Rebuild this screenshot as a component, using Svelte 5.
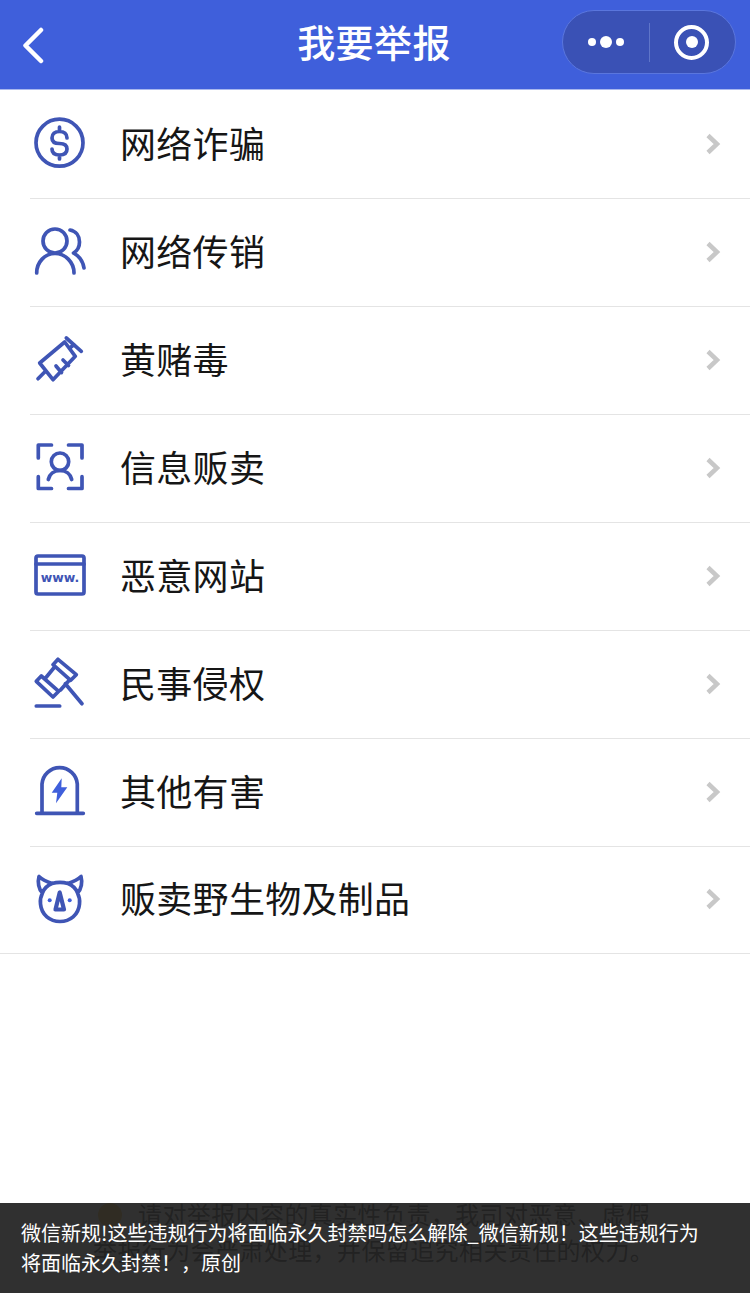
<script>
  const items = [
    { icon: 'dollar', label: '网络诈骗' },
    { icon: 'users', label: '网络传销' },
    { icon: 'syringe', label: '黄赌毒' },
    { icon: 'scan', label: '信息贩卖' },
    { icon: 'www', label: '恶意网站' },
    { icon: 'gavel', label: '民事侵权' },
    { icon: 'alarm', label: '其他有害' },
    { icon: 'rhino', label: '贩卖野生物及制品' }
  ];
</script>

<div class="page">
  <header class="nav">
    <svg class="back" viewBox="0 0 24 38" aria-hidden="true">
      <path d="M19 4 L3.5 19.5 L19 35" />
    </svg>
    <h1>我要举报</h1>
    <div class="capsule">
      <div class="dots">
        <span class="dot"></span>
        <span class="dot big"></span>
        <span class="dot"></span>
      </div>
      <span class="sep"></span>
      <div class="target"><span></span></div>
    </div>
  </header>

  <ul class="list">
    {#each items as item}
      <li class="row">
        <svg class="icon" viewBox="0 0 60 60" aria-hidden="true">
          {#if item.icon === 'dollar'}
            <circle cx="29.5" cy="28.7" r="23.5" />
            <path d="M37 24 C37 20 34 17.5 29.5 17.5 C25 17.5 22 20 22 24 C22 28 25.5 29.5 29.5 29.5 C33.5 29.5 37 31 37 35 C37 39 34 41 29.5 41 C25 41 22 39 22 35 M29.5 13 V17.5 M29.5 41 V45" />
          {:else if item.icon === 'users'}
            <circle cx="25" cy="19" r="12" />
            <path d="M6.7 51 C6.7 40 15 31.5 25 31.5 S44 40 44 51 M40 8 C46 9 49.5 14 49.5 20 C49.5 25 47 29 43.5 31 C49 34 53 40 54 46" />
          {:else if item.icon === 'syringe'}
            <path d="M9.7 33 L34.7 12 L45.3 26.3 L23 49.7 Z M39.7 18 L44 14.7 M36.3 8 L51.3 21.3 M8 48.7 L14.7 42 M26 36 L31.5 42.5 M33 30 L38.5 35.5" />
          {:else if item.icon === 'scan'}
            <path d="M21.5 7 H8.3 V20 M38.5 7 H52 V20 M21.5 50.5 H8.3 V38.7 M38.5 50.5 H52 V38.7" />
            <circle cx="30" cy="23.7" r="8.7" />
            <path d="M18.3 41.5 C19.5 36 24 32.5 30 32.5 S40.5 36 41.7 41.5" />
          {:else if item.icon === 'www'}
            <rect x="6" y="10" width="48" height="38" rx="2" />
            <path d="M6 18 H54" />
            <text x="30" y="36" text-anchor="middle">www.</text>
          {:else if item.icon === 'gavel'}
            <path d="M28 5.3 L46.3 20.7 L40.7 26.3 L23 10.7 Z M11.3 22 L28.7 37.3 L23 43 L6.3 27.3 Z M25 12.5 L16 23.5 M39.5 26 L30.5 36 M35.3 29.7 L52 49.7 M6.3 52 H29.7" />
          {:else if item.icon === 'alarm'}
            <path d="M12 51 V22 A17.7 17.7 0 0 1 47.3 22 V51 M6.7 51.3 H53.3" />
            <path class="solid" d="M31.7 16.3 L21.7 30.7 H27.3 L26 41.3 L37.3 25.3 H31.3 Z" />
          {:else if item.icon === 'rhino'}
            <path d="M22 13.5 C19 12.5 13 10.5 9 6.5 C7.5 12 8.5 19 12.5 23 C10.5 27 10 31 10.5 34 C11.5 45 20 51.5 30 51.5 S48.5 45 49.5 34 C50 31 49.5 27 47.5 23 C51.5 19 52.5 12 51 6.5 C47 10.5 41 12.5 38 13.5 C33 12 27 12 22 13.5 Z M12.5 23 C14 18.5 17 15.5 22 13.5 M47.5 23 C46 18.5 43 15.5 38 13.5" />
            <path class="horn" d="M29.7 22.5 L25.5 39.5 H34 Z" />
            <circle class="solid" cx="19.7" cy="30.3" r="2" />
            <circle class="solid" cx="39.7" cy="30.3" r="2" />
          {/if}
        </svg>
        <span class="label">{item.label}</span>
        <svg class="chevron" viewBox="0 0 16 22" aria-hidden="true">
          <path d="M3 2.5 L12 11 L3 19.5" />
        </svg>
      </li>
    {/each}
  </ul>

  <p class="notice">
    <span class="warn"></span>请对举报内容的真实性负责，我司对恶意、虚假举报行为会严肃处理，并保留追究相关责任的权力。
  </p>

  <div class="caption">微信新规!这些违规行为将面临永久封禁吗怎么解除_微信新规！这些违规行为将面临永久封禁！，原创</div>
</div>

<style>
  :global(body) {
    margin: 0;
    background: #fff;
  }

  .page {
    position: relative;
    width: 750px;
    height: 1293px;
    overflow: hidden;
    background: #fff;
    font-family: "Noto Sans CJK SC", "Liberation Sans", sans-serif;
  }

  .nav {
    position: relative;
    display: flex;
    align-items: center;
    justify-content: center;
    height: 89px;
    background: #3f5fdb;
    border-bottom: 1px solid #a9b8ee;
  }

  .back {
    position: absolute;
    left: 22px;
    top: 26px;
    width: 24px;
    height: 38px;
    fill: none;
    stroke: #fff;
    stroke-width: 4.5;
    stroke-linecap: round;
    stroke-linejoin: round;
  }

  h1 {
    margin: 0 2px 8px 0;
    font-size: 38px;
    font-weight: 500;
    letter-spacing: 0.4px;
    color: #fff;
  }

  .capsule {
    position: absolute;
    left: 562px;
    top: 10px;
    box-sizing: border-box;
    width: 174px;
    height: 64px;
    display: flex;
    align-items: center;
    background: #3a51b5;
    border: 1px solid #5a76dd;
    border-radius: 32px;
  }

  .dots {
    display: flex;
    align-items: center;
    gap: 4px;
    width: 86px;
    justify-content: center;
  }

  .dot {
    width: 8px;
    height: 8px;
    border-radius: 50%;
    background: #fff;
  }

  .dot.big {
    width: 12px;
    height: 12px;
  }

  .sep {
    width: 1px;
    height: 39px;
    background: #5f75c9;
  }

  .target {
    flex: 1;
    display: flex;
    justify-content: center;
    margin-right: 2px;
  }

  .target span {
    box-sizing: border-box;
    width: 35px;
    height: 35px;
    border-radius: 50%;
    border: 4px solid #fff;
    display: flex;
    align-items: center;
    justify-content: center;
  }

  .target span::after {
    content: "";
    width: 12px;
    height: 12px;
    border-radius: 50%;
    background: #fff;
  }

  .list {
    margin: 0;
    padding: 1px 0 0;
    list-style: none;
    border-bottom: 1px solid #e4e4e4;
  }

  .row {
    display: flex;
    align-items: center;
    height: 108px;
    margin-left: 30px;
    box-sizing: border-box;
    border-bottom: 1px solid #e4e4e4;
  }

  .row:last-child {
    border-bottom: none;
    height: 106px;
  }

  .icon {
    width: 60px;
    height: 60px;
    flex: none;
    margin: 0 30px 1px 0;
    fill: none;
    stroke: #3f55b5;
    stroke-width: 3.7;
    stroke-linecap: round;
    stroke-linejoin: round;
  }

  .row:last-child .icon {
    margin-bottom: 0;
  }

  .icon .solid {
    fill: #3f5fdb;
    stroke: none;
  }

  .icon .horn {
    stroke-width: 4.2;
  }

  .icon text {
    font-family: "DejaVu Sans", sans-serif;
    font-size: 12.5px;
    font-weight: 700;
    fill: #3f55b5;
    stroke: none;
  }

  .label {
    flex: 1;
    font-size: 36px;
    letter-spacing: 0.3px;
    color: #161616;
    margin-bottom: 6px;
  }

  .chevron {
    width: 16px;
    height: 22px;
    margin: 0 29px 2px 0;
    fill: none;
    stroke: #c8c8c8;
    stroke-width: 4.5;
  }

  .notice {
    margin: 242px 87px 0 93px;
    font-size: 24px;
    letter-spacing: 0.4px;
    line-height: 36px;
    color: #222;
  }

  .warn {
    display: inline-block;
    width: 24px;
    height: 24px;
    margin: 0 16px 0 5px;
    border-radius: 50%;
    background: #f5c02f;
    vertical-align: -3px;
  }

  .caption {
    position: absolute;
    left: 0;
    right: 0;
    bottom: 0;
    box-sizing: border-box;
    height: 90px;
    padding: 15px 40px 0 21px;
    background: rgba(34, 34, 34, 0.937);
    color: #fff;
    font-size: 20px;
    line-height: 30px;
  }
</style>
